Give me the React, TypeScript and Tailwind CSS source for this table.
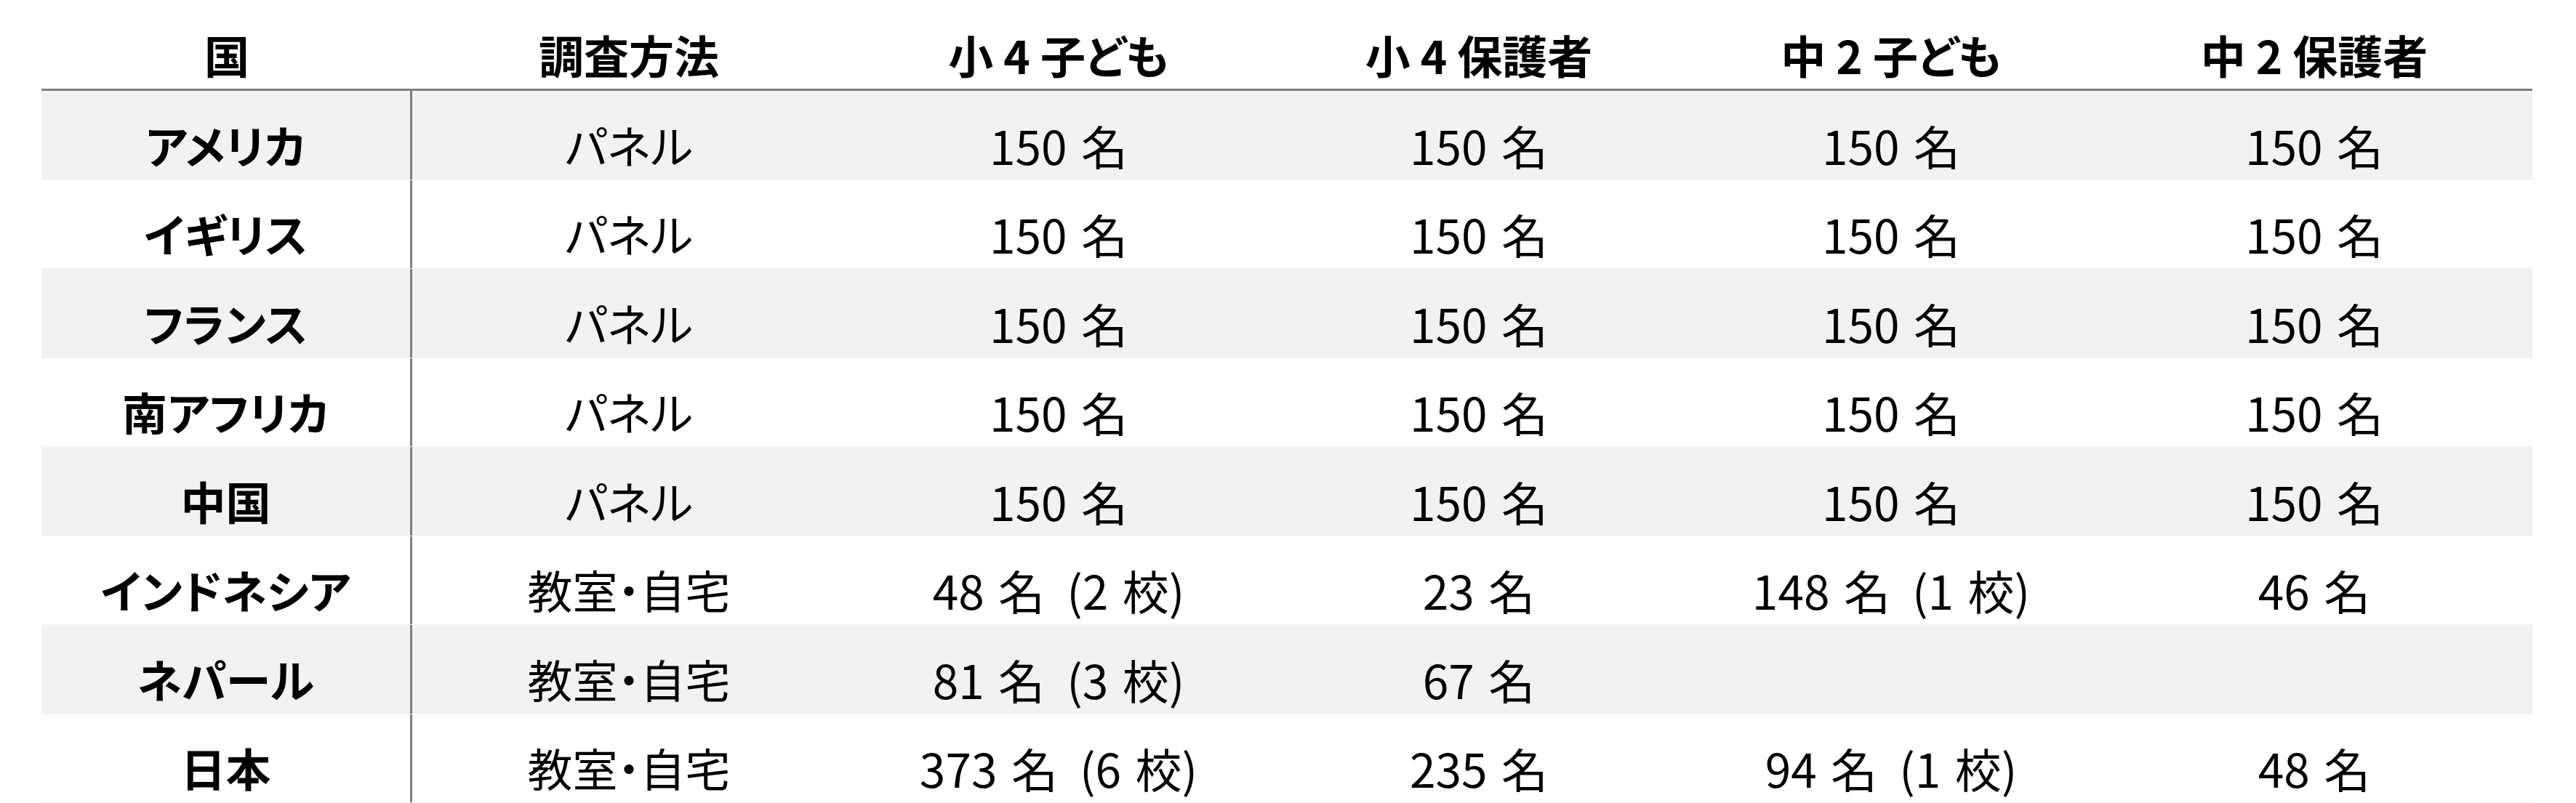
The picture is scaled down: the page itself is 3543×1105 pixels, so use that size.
import React from "react";

const headers = ["国", "調査方法", "小 4 子ども", "小 4 保護者", "中 2 子ども", "中 2 保護者"];

const rows: string[][] = [
  ["アメリカ", "パネル", "150 名", "150 名", "150 名", "150 名"],
  ["イギリス", "パネル", "150 名", "150 名", "150 名", "150 名"],
  ["フランス", "パネル", "150 名", "150 名", "150 名", "150 名"],
  ["南アフリカ", "パネル", "150 名", "150 名", "150 名", "150 名"],
  ["中国", "パネル", "150 名", "150 名", "150 名", "150 名"],
  ["インドネシア", "教室・自宅", "48 名 (2 校)", "23 名", "148 名 (1 校)", "46 名"],
  ["ネパール", "教室・自宅", "81 名 (3 校)", "67 名", "", ""],
  ["日本", "教室・自宅", "373 名 (6 校)", "235 名", "94 名 (1 校)", "48 名"],
];

const font = {
  fontFamily: '"Noto Sans CJK JP", "Noto Sans", sans-serif',
  fontFeatureSettings: '"palt"',
} as React.CSSProperties;

function Cell({ text }: { text: string }) {
  const idx = text.indexOf(" (");
  if (idx < 0) return <>{text}</>;
  return (
    <>
      <span>{text.slice(0, idx)}</span>
      <span className="ml-[30px]">{text.slice(idx + 1)}</span>
    </>
  );
}

export default function App() {
  return (
    <div className="w-[3543px] h-[1105px] bg-white overflow-hidden pl-[57px] text-black" style={font}>
      <div className="w-[3426px]">
        <div className="grid grid-cols-[510px_596px_586px_570px_564px_600px] h-[125px] border-b-[3px] border-[#7f7f7f]">
          {headers.map((h, i) => (
            <div key={i} className="flex items-center justify-center pt-[28px] text-[62px] font-bold leading-none">
              {h}
            </div>
          ))}
        </div>
        {rows.map((r, ri) => (
          <div
            key={ri}
            className={
              "grid grid-cols-[510px_596px_586px_570px_564px_600px] h-[122.5px] border-b border-[#f6f6f6] " +
              (ri % 2 === 0 ? "bg-[#f2f2f2]" : "bg-white")
            }
          >
            {r.map((c, ci) => (
              <div
                key={ci}
                className={
                  "flex items-center justify-center pt-[26px] leading-none whitespace-pre " +
                  (ci === 0
                    ? "text-[62px] font-bold border-r-[3px] border-[#7f7f7f]"
                    : ci === 1
                    ? "text-[62px] font-normal"
                    : "text-[64px] font-normal [word-spacing:0.08em]")
                }
              >
                {ci >= 2 ? <Cell text={c} /> : c}
              </div>
            ))}
          </div>
        ))}
      </div>
    </div>
  );
}
